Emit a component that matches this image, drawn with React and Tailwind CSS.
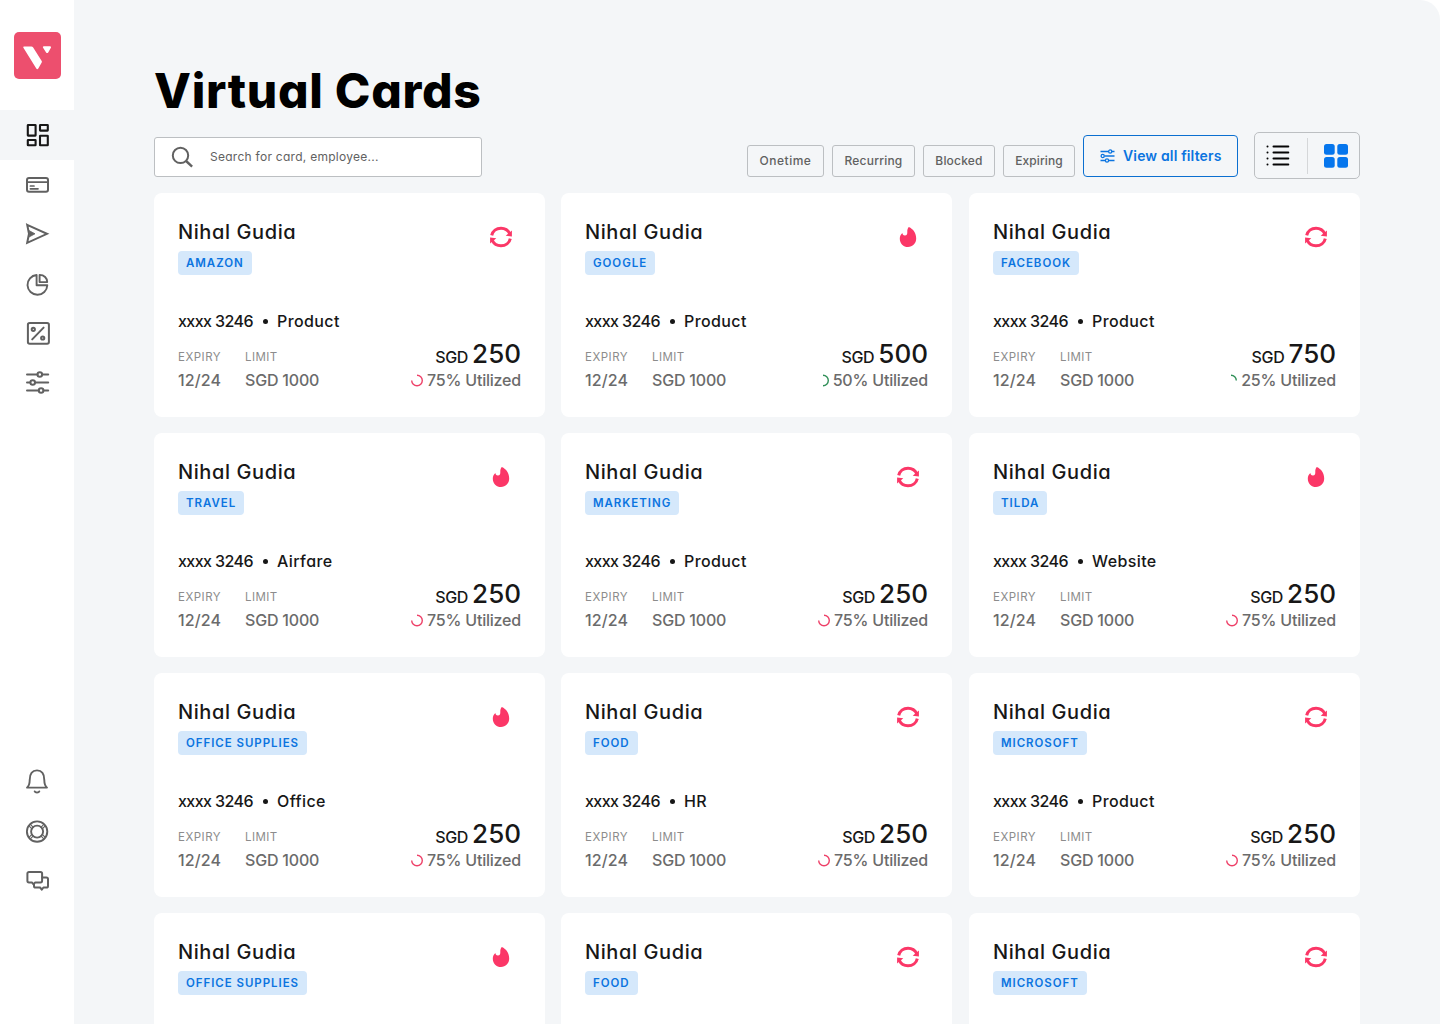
import React, { useState } from "react";
import clsx from "clsx";

const cards = [
  { tag: "AMAZON", type: "recurring", category: "Product", amount: 250, used: 75 },
  { tag: "GOOGLE", type: "onetime", category: "Product", amount: 500, used: 50 },
  { tag: "FACEBOOK", type: "recurring", category: "Product", amount: 750, used: 25 },
  { tag: "TRAVEL", type: "onetime", category: "Airfare", amount: 250, used: 75 },
  { tag: "MARKETING", type: "recurring", category: "Product", amount: 250, used: 75 },
  { tag: "TILDA", type: "onetime", category: "Website", amount: 250, used: 75 },
  { tag: "OFFICE SUPPLIES", type: "onetime", category: "Office", amount: 250, used: 75 },
  { tag: "FOOD", type: "recurring", category: "HR", amount: 250, used: 75 },
  { tag: "MICROSOFT", type: "recurring", category: "Product", amount: 250, used: 75 },
  { tag: "OFFICE SUPPLIES", type: "onetime", category: "Office", amount: 250, used: 75 },
  { tag: "FOOD", type: "recurring", category: "HR", amount: 250, used: 75 },
  { tag: "MICROSOFT", type: "recurring", category: "Product", amount: 250, used: 75 },
];

const filters = ["Onetime", "Recurring", "Blocked", "Expiring"];

function Icon({ children, width = 2 }) {
  return (
    <svg
      width="24"
      height="24"
      viewBox="0 0 24 24"
      fill="none"
      stroke="currentColor"
      strokeWidth={width}
      strokeLinejoin="round"
      strokeLinecap="round"
      className="overflow-visible"
    >
      {children}
    </svg>
  );
}

const DashboardIcon = () => (
  <Icon width={2.1}>
    <rect x="2.8" y="2" width="7.8" height="10.6" rx="0.3" />
    <rect x="15" y="2" width="7.8" height="5.6" rx="0.3" />
    <rect x="2.8" y="17" width="7.8" height="5.2" rx="0.3" />
    <rect x="15" y="12.8" width="7.8" height="9.4" rx="0.3" />
  </Icon>
);

const CardIcon = () => (
  <Icon>
    <rect x="2" y="5.9" width="21" height="13.8" rx="2" />
    <path d="M2 10.2h21M5.4 14h3.600M5.400 16.800h7.600" strokeWidth="1.700" />
  </Icon>
);

const SendIcon = () => (
  <Icon>
    <path d="M2.200 2.800 22 11.800 2.200 20.800 4 11.800Z" strokeLinejoin="miter" />
    <path d="M4.400 8.800 10 11.800 4.400 14.800Z" fill="currentColor" strokeWidth="0.800" />
  </Icon>
);

const PieIcon = () => (
  <Icon width={1.9}>
    <path d="M11.600 4A9.900 9.900 0 1 0 22.300 14.200H11.600Z" />
    <path d="M14.600 3.900v7.200h7.600c0-4-3-7.200-7.600-7.200Z" />
  </Icon>
);

const PercentIcon = () => (
  <Icon>
    <rect x="2.900" y="2" width="21" height="20.800" rx="1.800" />
    <path d="M7.200 18.400 18.600 6.600" />
    <circle cx="8.300" cy="8.300" r="1.600" />
    <circle cx="17.700" cy="17" r="1.600" />
  </Icon>
);

const SlidersIcon = () => (
  <Icon>
    <path d="M2 4.500h10.400M17.200 4.500h6M2 12.500h3.200M10.200 12.500h13M2 20.500h11.600M18.600 20.500h4.600" />
    <circle cx="14.800" cy="4.500" r="2.300" />
    <circle cx="7.700" cy="12.500" r="2.300" />
    <circle cx="16.100" cy="20.500" r="2.300" />
  </Icon>
);

const BellIcon = () => (
  <Icon width={1.9}>
    <path d="M2 17.600h20c-2.200-1.900-2.700-4.400-2.700-7.600C19.300 3.900 17 .4 12 .4S4.700 3.900 4.700 10c0 3.200-.5 5.700-2.700 7.600Z" />
    <path d="M9.700 21.400c.6 1.500 4 1.500 4.600 0" />
  </Icon>
);

const HelpIcon = () => (
  <Icon width={1.9}>
    <circle cx="12.100" cy="11.600" r="10.200" />
    <circle cx="12.100" cy="11.600" r="6" />
    <path d="M5.400 4.400 8.300 7.300M4 5.900l2.900 2.900M18.800 4.400l-2.900 2.900M20.200 5.900l-2.900 2.900M5.400 18.800l2.900-2.900M4 17.300l2.900-2.900M18.800 18.800l-2.900-2.900M20.200 17.300l-2.900-2.900" strokeWidth="1.100" />
  </Icon>
);

const ChatIcon = () => (
  <Icon>
    <path d="M4 2h11.500c.9 0 1.600.7 1.600 1.600v7.200c0 .9-.7 1.600-1.600 1.600H10.200l-1.700 1.900-1.600-1.900H4c-.9 0-1.600-.7-1.600-1.600V3.600C2.400 2.700 3.100 2 4 2Z" />
    <path d="M17.300 7.400h4.100c.9 0 1.600.7 1.600 1.600v6.900c0 .9-.7 1.600-1.600 1.600h-3l-1.600 2.100-1.700-2.100h-4.500c-.9 0-1.600-.7-1.600-1.600v-1.400" />
  </Icon>
);

function Logo() {
  return (
    <div className="mx-auto flex h-[47px] w-[47px] items-center justify-center rounded-[5px] bg-[#ed4f6e]">
      <svg width="47" height="47" viewBox="0 0 47 47" fill="#fff">
        <path d="M10.200 14.400h7.200c.7 0 1.200.3 1.600.9l8.700 13.700c.3.500.3 1 0 1.500l-3.400 6c-.5.900-1.500.9-2 .100L9.400 15.700c-.4-.7 0-1.300.8-1.300Z" />
        <path d="M29.800 14.300h6.200c.9 0 1.300.8.900 1.500l-2.700 4.600c-.5.800-1.600.8-2.100 0l-3-4.600c-.5-.7-.1-1.500.7-1.500Z" />
      </svg>
    </div>
  );
}

function Sidebar() {
  const top = [DashboardIcon, CardIcon, SendIcon, PieIcon, PercentIcon, SlidersIcon];
  const bottom = [BellIcon, HelpIcon, ChatIcon];
  return (
    <aside className="flex h-full w-[74px] shrink-0 flex-col bg-white pt-8 pb-[117px] text-[#616161]">
      <Logo />
      <nav className="mt-[31px] flex flex-col">
        {top.map((Item, i) => (
          <button
            key={i}
            className={clsx("flex h-[49.5px] items-center justify-center", i === 0 && "bg-[#f4f6f8] text-[#171717]")}
          >
            <Item />
          </button>
        ))}
      </nav>
      <div className="mt-auto flex flex-col">
        {bottom.map((Item, i) => (
          <button key={i} className="flex h-[50px] items-center justify-center">
            <Item />
          </button>
        ))}
      </div>
    </aside>
  );
}

function RecurringIcon() {
  return (
    <svg width="24" height="24" viewBox="0 0 24 24" fill="none" stroke="#fb3767" strokeWidth="3">
      <path d="M2.700 10.400C3.600 6 7.400 3.200 12 3.200c3.900 0 7.100 2 8.700 5.400" />
      <path d="M21.300 13.600C20.400 18 16.600 20.800 12 20.800c-3.900 0-7.100-2-8.700-5.400" />
      <path d="M22.900 5.600v6l-6.200-.8ZM1.100 18.400v-6l6.200.8Z" fill="#fb3767" stroke="none" />
    </svg>
  );
}

function FlameIcon() {
  return (
    <svg width="24" height="24" viewBox="0 0 24 24" fill="#fb3767">
      <path d="M12.800 2c4.500 2 7.400 6.200 7.400 11.500 0 4.900-3.600 8.500-8.200 8.500s-8.200-3.600-8.200-8.300c0-2.300.8-4.200 2.600-5.700.1 1.500.9 2.500 2.400 2.600 2 .1 2.700-1.700 2.500-3.900-.1-1.700.3-3.300 1.500-4.700Z" />
    </svg>
  );
}

function Usage({ used }) {
  const arcs = {
    75: "M7 1.200A5.300 5.300 0 1 1 1.700 6.500",
    50: "M7 1.200A5.300 5.300 0 0 1 7 11.800",
    25: "M7 1.200A5.300 5.300 0 0 1 12.300 6.500",
  };
  return (
    <svg width="14" height="13" viewBox="0 0 14 13" fill="none" stroke={used > 50 ? "#ee4068" : "#2f8f57"} strokeWidth="1.400">
      <path d={arcs[used]} />
    </svg>
  );
}

function VirtualCard({ card }) {
  return (
    <div className="h-[224px] w-[391px] rounded-lg bg-white pt-6 pr-6 pl-6">
      <div className="flex justify-between">
        <div>
          <h2 className="text-[20px] leading-[30px] font-medium tracking-[0.6px] text-[#171717]">Nihal Gudia</h2>
          <span className="mt-1 inline-flex h-6 items-center rounded-[4px] bg-[#d5e8fb] px-2 pt-px text-[11.5px] font-semibold tracking-[0.95px] text-[#0b74e0]">
            {card.tag}
          </span>
        </div>
        <div className="mt-2 mr-2">{card.type === "recurring" ? <RecurringIcon /> : <FlameIcon />}</div>
      </div>
      <div className="mt-[34px] flex h-6 items-center text-[16px] font-medium text-[#171717]">
        <span className="w-[75px] tracking-[-0.58px] whitespace-nowrap">xxxx 3246</span>
        <span className="ml-[10px] h-[5px] w-[5px] rounded-full bg-[#171717]" />
        <span className="ml-[9px] tracking-[0.4px]">{card.category}</span>
      </div>
      <div className="mt-[7px] flex justify-between text-[#6b6b6b]">
        <div className="flex pt-1">
          <div className="w-[67px]">
            <p className="h-6 pt-px text-[11.5px] leading-6 tracking-[0.5px] text-[#8c8c8c]">EXPIRY</p>
            <p className="text-[16px] leading-6 font-medium tracking-[0.1px]">12/24</p>
          </div>
          <div>
            <p className="h-6 pt-px text-[11.5px] leading-6 tracking-[0.4px] text-[#8c8c8c]">LIMIT</p>
            <p className="text-[16px] leading-6 font-medium tracking-[-0.2px]">SGD 1000</p>
          </div>
        </div>
        <div className="flex flex-col items-end">
          <p className="flex h-7 items-baseline gap-1 text-[#171717]">
            <span className="text-[16px] font-medium tracking-[-0.3px]">SGD</span>
            <span className="text-[26px] leading-7 font-medium">{card.amount}</span>
          </p>
          <p className="flex items-center gap-[3px] text-[16px] leading-6">
            <Usage used={card.used} />
            <span className="font-medium tracking-[-0.2px]">{card.used}% Utilized</span>
          </p>
        </div>
      </div>
    </div>
  );
}

function Toolbar() {
  const [query, setQuery] = useState("");
  return (
    <div className="flex h-12 items-start justify-between">
      <label className="mt-[5px] flex h-10 w-[328px] items-center rounded-[3px] border border-[#bcbfc2] bg-white pl-4">
        <svg width="24" height="24" viewBox="0 0 24 24" fill="none" stroke="#616161" strokeWidth="2">
          <circle cx="9.500" cy="10.400" r="7.700" />
          <path d="m15.100 16 6 5.600" strokeWidth="2.400" />
        </svg>
        <input
          value={query}
          onChange={(e) => setQuery(e.target.value)}
          placeholder="Search for card, employee..."
          className="ml-[15px] w-[240px] text-[12px] tracking-[0.27px] outline-none placeholder:text-[#616161]"
        />
      </label>
      <div className="flex">
        <div className="mt-[13px] flex gap-2">
          {filters.map((name, i) => (
            <button
              key={name}
              className={clsx(
                "h-8 rounded-[3px] border border-[#bcbfc2] text-[12px] font-medium text-[#616161]",
                ["w-[77px] tracking-[0.5px]", "w-[83px] tracking-[0.2px]", "w-[72px] tracking-[0.2px]", "w-[72px] tracking-[0.1px]"][i]
              )}
            >
              {name}
            </button>
          ))}
        </div>
        <button className="mt-[3px] ml-2 flex h-[42px] w-[155px] items-center rounded-[4px] border border-[#0b6fd0] pb-px pl-4 text-[14px] font-semibold text-[#0b74e0]">
          <svg width="15" height="14" viewBox="0 0 15 14" fill="none" stroke="currentColor" strokeWidth="1.300">
            <path d="M.5 2.500h8M12 2.500h2.500M4.700 7h9.800M.5 11.500h4.500M9 11.500h5.500" />
            <circle cx="10.200" cy="2.500" r="1.600" />
            <circle cx="2.700" cy="7" r="1.600" />
            <circle cx="7" cy="11.500" r="1.600" />
          </svg>
          <span className="ml-2 tracking-[0.15px]">View all filters</span>
        </button>
        <div className="ml-4 flex h-[47px] w-[106px] items-center rounded-[5px] border border-[#bcbfc2] pl-[11px]">
          <svg width="24" height="22" viewBox="0 0 24 22" stroke="#050505" strokeWidth="2" strokeLinecap="round">
            <path d="M7.500 1.500h14.800M7.500 7.500h14.800M7.500 13.500h14.800M7.500 19.500h14.800M1.500 1.500h.01M1.500 7.500h.01M1.500 13.500h.01M1.500 19.500h.01" />
          </svg>
          <span className="ml-[17px] h-9 w-px bg-[#d5d7d9]" />
          <svg width="24" height="24" viewBox="0 0 24 24" fill="#0676ed" className="ml-4">
            <rect x="0" y="0" width="10.700" height="10.700" rx="2.500" />
            <rect x="13.300" y="0" width="10.700" height="10.700" rx="2.500" />
            <rect x="0" y="13" width="10.700" height="10.700" rx="2.500" />
            <rect x="13.300" y="13" width="10.700" height="10.700" rx="2.500" />
          </svg>
        </div>
      </div>
    </div>
  );
}

export default function App() {
  return (
    <div className="flex h-[1024px] w-[1440px] overflow-hidden bg-white font-['Inter',sans-serif] [font-feature-settings:'cv11']">
      <Sidebar />
      <main className="flex-1 overflow-x-hidden overflow-y-auto rounded-tr-[20px] bg-[#f4f6f8] pt-[54px] pr-20 pl-20 [scrollbar-width:none]">
        <h1 className="h-[78px] text-[48px] leading-[74px] font-extrabold tracking-[0.7px] whitespace-nowrap text-black">Virtual Cards</h1>
        <Toolbar />
        <div className="mt-[13px] grid grid-cols-[391px_392px_391px] gap-4">
          {cards.map((card, i) => (
            <VirtualCard key={i} card={card} />
          ))}
        </div>
      </main>
    </div>
  );
}
